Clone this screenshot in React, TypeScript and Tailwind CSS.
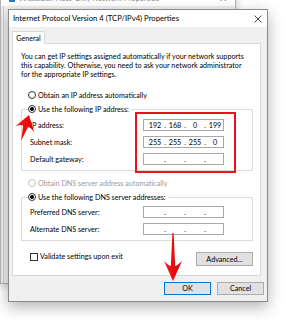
import React from "react"

function Radio({ checked, disabled, label }: { checked?: boolean; disabled?: boolean; label: string }) {
    return <div className={"flex items-center h-[10px] gap-[2px] " + (disabled ? "text-[#9a9a9a]" : "text-black")}>
        <span className={"w-[8px] h-[8px] rounded-full border bg-white flex items-center justify-center " + (disabled ? "border-[#c4c4c4]" : "border-[#333]")}>
            {checked && <span className="w-[4px] h-[4px] rounded-full bg-black" />}
        </span>
        <span>{label}</span>
    </div>
}

function IpBox({ parts }: { parts: string[] }) {
    return <div className="w-[81px] h-[12px] border border-[#a8a8a8] bg-white flex items-center pl-[3px]">
        {parts.map((p, i) => <React.Fragment key={i}>
            {i > 0 && <span className="w-[4px] text-center">.</span>}
            <span className="w-[16px] text-center">{p}</span>
        </React.Fragment>)}
    </div>
}

function Row({ label, parts }: { label: string; parts: string[] }) {
    return <div className="flex items-center">
        <span className="w-[115px] pl-[2px]">{label}</span>
        <IpBox parts={parts} />
    </div>
}

const empty = ["", "", "", ""]

export default function App() {
    return <div className="relative w-[304px] h-[320px] bg-white overflow-hidden font-['Lato',sans-serif] text-[7.2px] leading-[9px] text-black">
        {/* window behind */}
        <div className="absolute left-0 top-[-10px] w-[236px] h-[294px] border border-[#b4b4b4] bg-[#f0f0f0] shadow-[0_2px_8px_rgba(0,0,0,0.2)] flex flex-col">
            <div className="h-[15px] bg-white flex items-center justify-between px-[8px] text-[#8a8a8a] text-[7.7px]">
                <div className="flex items-center gap-[3px]">
                    <span className="w-[6px] h-[6px] bg-[#2b78c5]" />
                    <span>VirtualBox Host-Only Network Properties</span>
                </div>
                <span className="text-[10px] text-[#999]">✕</span>
            </div>
            <div className="flex-1 ml-[2px] border-l border-[#d0d0d0]" />
        </div>

        {/* dialog */}
        <div className="absolute left-[8px] top-[9px] w-[260px] h-[293px] border border-[#8a8a8a] bg-[#f0f0f0] shadow-[0_5px_14px_rgba(0,0,0,0.3)] flex flex-col">
            <div className="h-[17px] bg-white flex items-center justify-between pl-[4px] pr-[5px]">
                <span className="text-[7.7px]">Internet Protocol Version 4 (TCP/IPv4) Properties</span>
                <svg width="8" height="8" viewBox="0 0 8 8"><path d="M0.5 0.5 L7.5 7.5 M7.5 0.5 L0.5 7.5" stroke="#333" strokeWidth="0.9" /></svg>
            </div>
            <div className="flex-1 flex flex-col px-[3px] pt-[4px]">
                <div className="relative z-10 self-start w-[33px] h-[13px] -mb-px bg-white border border-b-0 border-[#d9d9d9] flex items-center justify-center">General</div>
                <div className="w-[249px] h-[233px] bg-white border border-[#d9d9d9] flex flex-col pl-[8px] pr-[7px] pt-[8px]">
                    <p className="whitespace-nowrap">
                        You can get IP settings assigned automatically if your network supports<br />
                        this capability. Otherwise, you need to ask your network administrator<br />
                        for the appropriate IP settings.
                    </p>
                    <div className="mt-[11px] pl-[7px]">
                        <Radio label="Obtain an IP address automatically" />
                    </div>
                    <fieldset className="mt-[4px] border border-[#dcdcdc] pl-[6px] pb-[5px]">
                        <legend className="pr-[2px]"><Radio checked label="Use the following IP address:" /></legend>
                        <div className="mt-[5px] flex flex-col gap-[5px]">
                            <Row label="IP address:" parts={["192", "168", "0", "199"]} />
                            <Row label="Subnet mask:" parts={["255", "255", "255", "0"]} />
                            <Row label="Default gateway:" parts={empty} />
                        </div>
                    </fieldset>
                    <div className="mt-[7px] pl-[7px]">
                        <Radio disabled label="Obtain DNS server address automatically" />
                    </div>
                    <fieldset className="mt-[4px] border border-[#dcdcdc] pl-[6px] pb-[5px]">
                        <legend className="pr-[2px]"><Radio checked label="Use the following DNS server addresses:" /></legend>
                        <div className="mt-[4px] flex flex-col gap-[5px]">
                            <Row label="Preferred DNS server:" parts={empty} />
                            <Row label="Alternate DNS server:" parts={empty} />
                        </div>
                    </fieldset>
                    <div className="mt-[11px] flex items-start justify-between">
                        <div className="flex items-center gap-[2px] pl-[9px]">
                            <span className="w-[8px] h-[8px] border border-[#333] bg-white" />
                            <span>Validate settings upon exit</span>
                        </div>
                        <div className="w-[57px] h-[14px] border border-[#adadad] bg-[#e1e1e1] flex items-center justify-center">Advanced...</div>
                    </div>
                </div>
                <div className="mt-[6px] flex justify-end gap-[6px]">
                    <div className="w-[47px] h-[13px] border border-[#0078d7] bg-[#e1e1e1] flex items-center justify-center">OK</div>
                    <div className="w-[47px] h-[13px] border border-[#adadad] bg-[#e1e1e1] flex items-center justify-center">Cancel</div>
                </div>
            </div>
        </div>

        {/* annotations */}
        <div className="absolute left-[135px] top-[112px] w-[101px] h-[61px] border-2 border-[#e8141c]" />
        <svg className="absolute left-0 top-0 pointer-events-none" width="304" height="320" viewBox="0 0 304 320">
            <defs>
                <linearGradient id="ar" x1="0" x2="1" y1="0" y2="0">
                    <stop offset="0" stopColor="#ff1a1a" />
                    <stop offset="1" stopColor="#d40000" />
                </linearGradient>
            </defs>
            <g transform="translate(29 115) rotate(17)">
                <path d="M0 0 L10 15 Q5 11 2.5 12 L0 27 L-2.5 12 Q-5 11 -10 15 Z" fill="url(#ar)" />
            </g>
            <g transform="translate(173 281)">
                <path d="M0 0 L9 -20 Q4 -15 2.2 -15 L0.6 -48 L-0.6 -48 L-2.2 -15 Q-4 -15 -9 -20 Z" fill="url(#ar)" />
            </g>
        </svg>
    </div>
}
